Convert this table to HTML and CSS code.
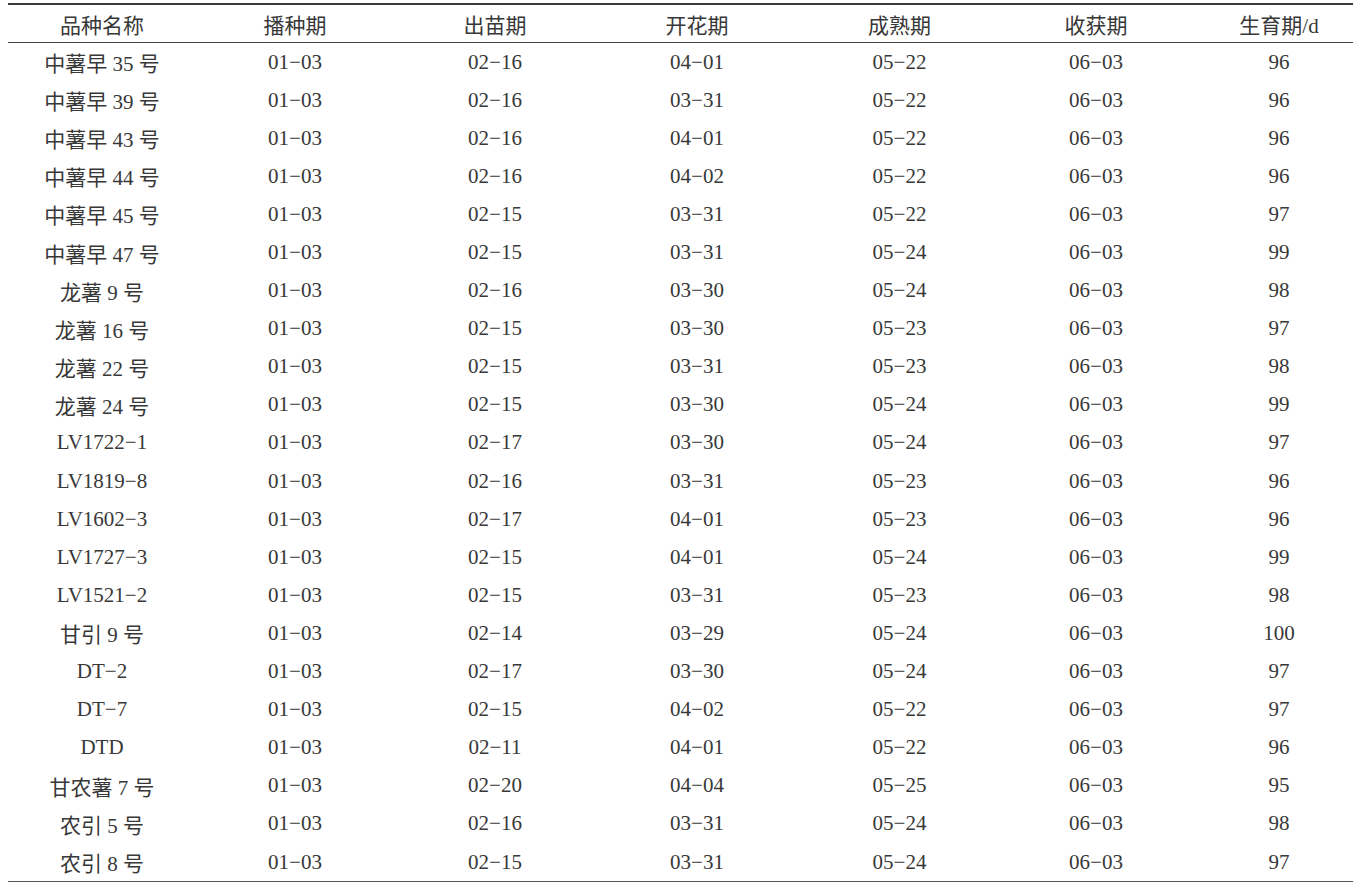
FILE: index.html
```html
<!DOCTYPE html>
<html lang="zh">
<head>
<meta charset="utf-8">
<title>品种生育期</title>
<link rel="stylesheet" href="styles.css">
</head>
<body>
<table class="data">
<colgroup>
<col class="c1"><col class="c2"><col class="c3"><col class="c4"><col class="c5"><col class="c6"><col class="c7">
</colgroup>
<thead>
<tr><th>品种名称</th><th>播种期</th><th>出苗期</th><th>开花期</th><th>成熟期</th><th>收获期</th><th>生育期/d</th></tr>
</thead>
<tbody>
<tr><td>中薯早 35 号</td><td>01−03</td><td>02−16</td><td>04−01</td><td>05−22</td><td>06−03</td><td>96</td></tr>
<tr><td>中薯早 39 号</td><td>01−03</td><td>02−16</td><td>03−31</td><td>05−22</td><td>06−03</td><td>96</td></tr>
<tr><td>中薯早 43 号</td><td>01−03</td><td>02−16</td><td>04−01</td><td>05−22</td><td>06−03</td><td>96</td></tr>
<tr><td>中薯早 44 号</td><td>01−03</td><td>02−16</td><td>04−02</td><td>05−22</td><td>06−03</td><td>96</td></tr>
<tr><td>中薯早 45 号</td><td>01−03</td><td>02−15</td><td>03−31</td><td>05−22</td><td>06−03</td><td>97</td></tr>
<tr><td>中薯早 47 号</td><td>01−03</td><td>02−15</td><td>03−31</td><td>05−24</td><td>06−03</td><td>99</td></tr>
<tr><td>龙薯 9 号</td><td>01−03</td><td>02−16</td><td>03−30</td><td>05−24</td><td>06−03</td><td>98</td></tr>
<tr><td>龙薯 16 号</td><td>01−03</td><td>02−15</td><td>03−30</td><td>05−23</td><td>06−03</td><td>97</td></tr>
<tr><td>龙薯 22 号</td><td>01−03</td><td>02−15</td><td>03−31</td><td>05−23</td><td>06−03</td><td>98</td></tr>
<tr><td>龙薯 24 号</td><td>01−03</td><td>02−15</td><td>03−30</td><td>05−24</td><td>06−03</td><td>99</td></tr>
<tr><td>LV1722−1</td><td>01−03</td><td>02−17</td><td>03−30</td><td>05−24</td><td>06−03</td><td>97</td></tr>
<tr><td>LV1819−8</td><td>01−03</td><td>02−16</td><td>03−31</td><td>05−23</td><td>06−03</td><td>96</td></tr>
<tr><td>LV1602−3</td><td>01−03</td><td>02−17</td><td>04−01</td><td>05−23</td><td>06−03</td><td>96</td></tr>
<tr><td>LV1727−3</td><td>01−03</td><td>02−15</td><td>04−01</td><td>05−24</td><td>06−03</td><td>99</td></tr>
<tr><td>LV1521−2</td><td>01−03</td><td>02−15</td><td>03−31</td><td>05−23</td><td>06−03</td><td>98</td></tr>
<tr><td>甘引 9 号</td><td>01−03</td><td>02−14</td><td>03−29</td><td>05−24</td><td>06−03</td><td>100</td></tr>
<tr><td>DT−2</td><td>01−03</td><td>02−17</td><td>03−30</td><td>05−24</td><td>06−03</td><td>97</td></tr>
<tr><td>DT−7</td><td>01−03</td><td>02−15</td><td>04−02</td><td>05−22</td><td>06−03</td><td>97</td></tr>
<tr><td>DTD</td><td>01−03</td><td>02−11</td><td>04−01</td><td>05−22</td><td>06−03</td><td>96</td></tr>
<tr><td>甘农薯 7 号</td><td>01−03</td><td>02−20</td><td>04−04</td><td>05−25</td><td>06−03</td><td>95</td></tr>
<tr><td>农引 5 号</td><td>01−03</td><td>02−16</td><td>03−31</td><td>05−24</td><td>06−03</td><td>98</td></tr>
<tr><td>农引 8 号</td><td>01−03</td><td>02−15</td><td>03−31</td><td>05−24</td><td>06−03</td><td>97</td></tr>
</tbody>
</table>
</body>
</html>
```
FILE: styles.css
```css
html, body {
  margin: 0;
  padding: 0;
  background: #ffffff;
  overflow: hidden;
}
body {
  padding: 3px 0 0 8px;
  font-family: "Liberation Serif", "Noto Sans CJK SC", serif;
  font-size: 21px;
  color: #383838;
}
.data {
  border-collapse: collapse;
  table-layout: fixed;
  width: 1359px;
  border-top: 2px solid #3a3a3a;
  border-bottom: 2px solid #555555;
}
.c1 { width: 188px; }
.c2 { width: 198px; }
.c3 { width: 202px; }
.c4 { width: 202px; }
.c5 { width: 203px; }
.c6 { width: 190px; }
.c7 { width: 176px; }
.data th,
.data td {
  padding: 0;
  text-align: center;
  font-weight: normal;
  white-space: nowrap;
}
.data th {
  height: 37px;
  border-bottom: 1px solid #444444;
}
.data td {
  height: 38.1px;
}
```
